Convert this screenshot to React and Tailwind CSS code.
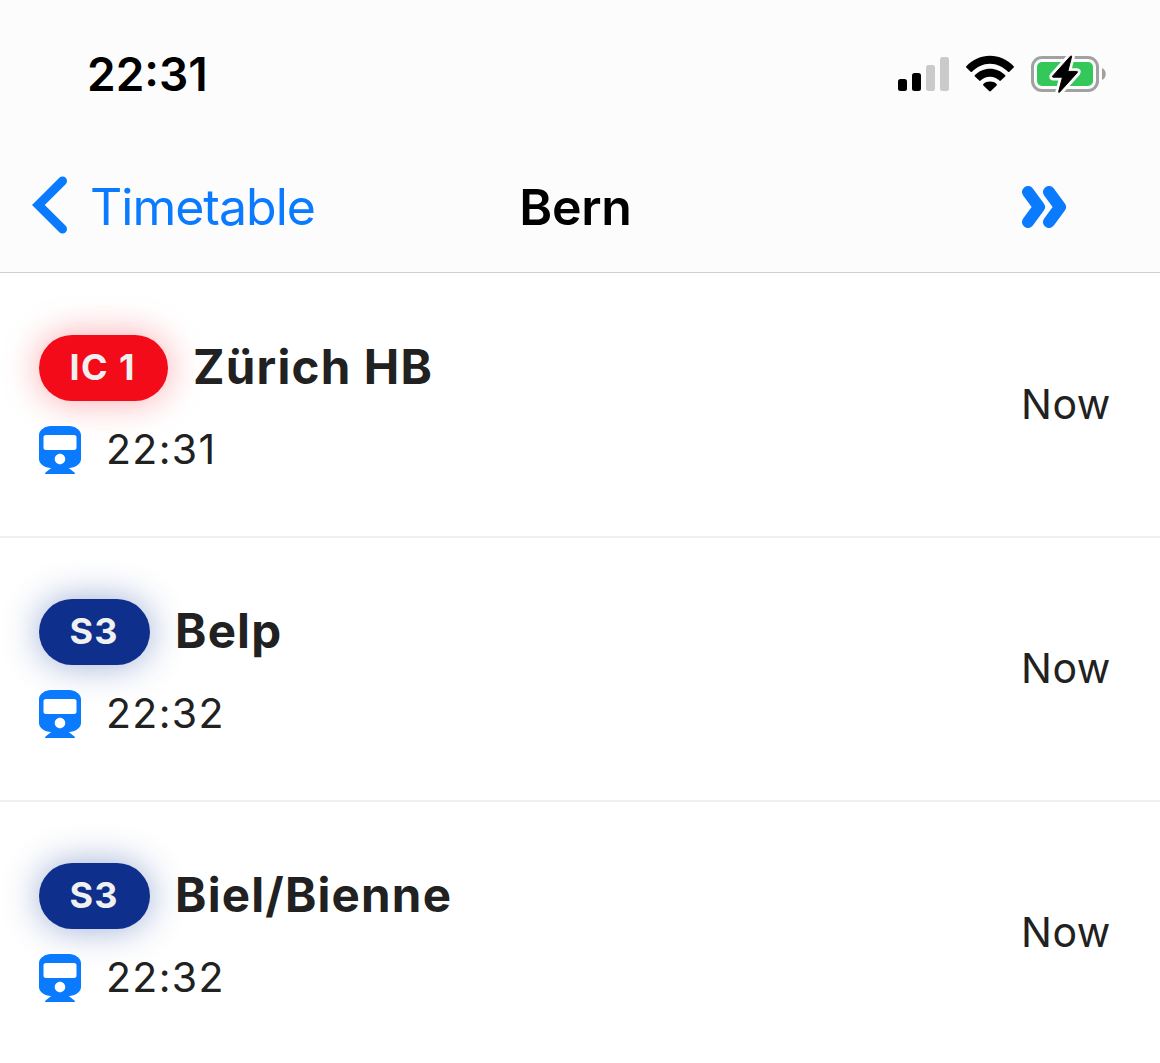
import React from "react";
import { FaTrain } from "react-icons/fa";

const departures = [
  { line: "IC 1", to: "Zürich HB", time: "22:31", eta: "Now", long: true },
  { line: "S3", to: "Belp", time: "22:32", eta: "Now" },
  { line: "S3", to: "Biel/Bienne", time: "22:32", eta: "Now" },
];

function Signal() {
  return (
    <svg width="52" height="36" viewBox="0 0 52 36">
      <rect x="0" y="23" width="9" height="12" rx="2.5" />
      <rect x="14" y="17" width="9" height="18" rx="2.5" />
      <rect x="28" y="9" width="9" height="26" rx="2.5" fill="#cacaca" />
      <rect x="42" y="1" width="9" height="34" rx="2.5" fill="#cacaca" />
    </svg>
  );
}

function Wifi() {
  return (
    <svg width="50" height="38" viewBox="0 0 50 38">
      <path d="M1.300 11.200C7.800 4.700 16 .8 25 .8s17.200 3.900 23.700 10.400q.6.700 0 1.400l-4.300 4.200q-.7.600-1.400 0C38 11.900 31.800 8.800 25 8.800S12 11.900 7 16.800q-.7.600-1.400 0l-4.300-4.200q-.6-.7 0-1.400z" />
      <path d="M9.900 20.100C14 16.200 19.200 13.800 25 13.800s11 2.400 15.100 6.300q.7.700 0 1.400l-4.300 4.100q-.7.600-1.400 0C31.900 23.200 28.700 21.700 25 21.700s-6.900 1.500-9.400 3.900q-.7.600-1.400 0l-4.300-4.100q-.7-.7 0-1.400z" />
      <path d="M18.400 28.900C20.200 27.400 22.500 26.600 25 26.600s4.800.8 6.600 2.300q.8.700 0 1.500L25.900 36.100q-.9.800-1.800 0l-5.700-5.700q-.8-.8 0-1.500z" />
    </svg>
  );
}

function Battery() {
  const bolt = "M39.500 .5L21.800 20.200q-1 1.300.6 1.300H31.500L27.700 35.800q-.3 1.700 1 .5L46.200 17q1-1.300-.6-1.300H36.800L40.600 1q.2-1.300-1.100-.5z";
  return (
    <svg width="77" height="40" viewBox="0 0 77 40" className="overflow-visible">
      <rect x="1.500" y="3.500" width="65" height="33" rx="9.500" fill="none" stroke="#a1a1a1" strokeWidth="3" />
      <rect x="6" y="8" width="56" height="24" rx="5" fill="#34c759" />
      <path d="M71 14c5 2 5 10 0 12z" fill="#a1a1a1" />
      <g transform="translate(0 1.700)">
        <path d={bolt} fill="#fcfcfc" stroke="#fcfcfc" strokeWidth="6.500" strokeLinejoin="round" />
        <path d={bolt} fill="#000" stroke="#000" strokeWidth="1" />
      </g>
    </svg>
  );
}

function Departure({ item }) {
  return (
    <li className="flex h-[264px] items-start justify-between border-b-2 border-[#efefef] pt-[61px] pl-[39px] pr-[49px] text-[#212121]">
      <div>
        <div className="flex h-[66px] items-center">
          <span
            className={
              item.long
                ? "flex h-[66px] w-[129px] items-center rounded-full bg-[#f30b19] pb-[2px] pl-[30.5px] text-[36px] leading-none font-bold tracking-[1.400px] whitespace-nowrap text-[#f0f0f0] shadow-[0_0_36px_rgba(243,11,25,0.36)]"
                : "flex h-[66px] w-[111px] items-center rounded-full bg-[#0f2f8c] pb-[2px] pl-[30.5px] text-[36px] leading-none font-bold tracking-[1.300px] text-[#f0f0f0] shadow-[0_0_36px_rgba(15,58,150,0.42)]"
            }
          >
            {item.line}
          </span>
          <span className="ml-[25px] pb-[3px] text-[47.500px] leading-none font-bold tracking-[1.200px] whitespace-nowrap">{item.to}</span>
        </div>
        <div className="mt-[25px] flex h-12 items-center">
          <FaTrain className="h-12 w-[42px] text-[#0a7aff]" />
          <span className="ml-[25px] pb-[1px] text-[41px] leading-none font-normal tracking-[1.350px]">{item.time}</span>
        </div>
      </div>
      <span className="mt-[47px] text-[41px] leading-[44px] font-normal tracking-[0.600px]">{item.eta}</span>
    </li>
  );
}

export default function App() {
  return (
    <div className="h-[1063px] w-[1160px] overflow-hidden bg-white font-[Inter,sans-serif]">
      <header className="h-[273px] border-b border-[#cfcfcf] bg-[#fcfcfc]">
        <div className="flex h-[148px] items-center justify-between pl-[87px] pr-[52px]">
          <span className="text-[46px] leading-none font-semibold">22:31</span>
          <div className="flex items-center">
            <Signal />
            <span className="ml-[15px]"><Wifi /></span>
            <span className="ml-4"><Battery /></span>
          </div>
        </div>
        <nav className="grid h-[118px] grid-cols-[500px_150px_1fr] items-center">
          <div className="flex items-center pl-8 text-[#0a7aff]">
            <svg width="36" height="58" viewBox="0 0 36 58" className="relative -top-[2px]">
              <path d="M30.500 5L6.300 29 30.500 53" fill="none" stroke="currentColor" strokeWidth="9" strokeLinecap="round" strokeLinejoin="miter" />
            </svg>
            <span className="ml-[22px] text-[50px] leading-none tracking-[-1px]">Timetable</span>
          </div>
          <h1 className="pl-px text-center text-[50px] leading-none font-semibold tracking-[-0.300px]">Bern</h1>
          <div className="flex justify-end pr-[93px]">
            <svg width="46" height="44" viewBox="0 0 46 44" fill="none" stroke="#0a7aff" strokeWidth="12" strokeLinecap="round" strokeLinejoin="round">
              <path d="M7 7L18 22 7 37" />
              <path d="M28 7L39 22 28 37" />
            </svg>
          </div>
        </nav>
      </header>
      <ul className="pt-px">
        {departures.map((d, i) => (
          <Departure key={i} item={d} />
        ))}
      </ul>
    </div>
  );
}
